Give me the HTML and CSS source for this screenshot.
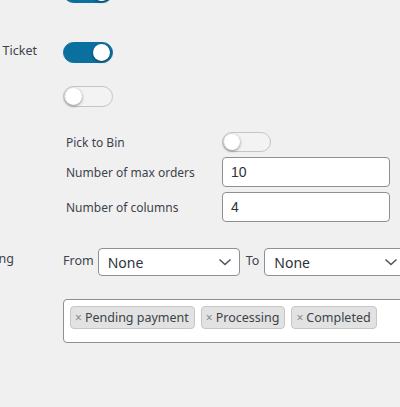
FILE: index.html
```html
<!DOCTYPE html>
<html>
<head>
<meta charset="utf-8">
<link rel="stylesheet" href="styles.css">
</head>
<body>
<div class="form">
  <div class="row row-first">
    <div class="th"></div>
    <div class="td"><span class="toggle on"><span class="knob"></span></span></div>
  </div>
  <div class="row row-ticket">
    <div class="th th-ticket"><span class="th-text">Print Ticket</span></div>
    <div class="td"><span class="toggle on"><span class="knob"></span></span></div>
  </div>
  <div class="row row-third">
    <div class="th"></div>
    <div class="td">
      <span class="toggle"><span class="knob"></span></span>
      <div class="sub">
        <div class="sub-label">Pick to Bin</div>
        <div class="sub-field"><span class="toggle small"><span class="knob"></span></span></div>
        <div class="sub-label">Number of max orders</div>
        <div class="sub-field"><input class="text" type="text" value="10"></div>
        <div class="sub-label">Number of columns</div>
        <div class="sub-field"><input class="text" type="text" value="4"></div>
      </div>
    </div>
  </div>
  <div class="row row-status">
    <div class="th th-status"><span class="th-text">Order Status Filtering</span></div>
    <div class="td">
      <div class="range">
        <span class="range-label">From</span>
        <div class="select"><span>None</span><svg class="chev" width="14" height="8" viewBox="0 0 14 8"><path d="M1.5 1.5 L7 6.5 L12.5 1.5" fill="none" stroke="#50575e" stroke-width="1.6"/></svg></div>
        <span class="range-label to">To</span>
        <div class="select"><span>None</span><svg class="chev" width="14" height="8" viewBox="0 0 14 8"><path d="M1.5 1.5 L7 6.5 L12.5 1.5" fill="none" stroke="#50575e" stroke-width="1.6"/></svg></div>
      </div>
      <div class="tags">
        <span class="tag"><span class="x">×</span>Pending payment</span>
        <span class="tag"><span class="x">×</span>Processing</span>
        <span class="tag"><span class="x">×</span>Completed</span>
      </div>
    </div>
  </div>
</div>
</body>
</html>
```

FILE: styles.css
```css
html, body {
  margin: 0;
  padding: 0;
  background: #f0f0f1;
  overflow: hidden;
}
body {
  width: 400px;
  height: 407px;
  font-family: "Noto Sans", "Open Sans", sans-serif;
  color: #3c434a;
  font-size: 12px;
}
.form {
  display: flex;
  flex-direction: column;
}
.row {
  display: grid;
  grid-template-columns: 63px 500px;
}
.th {
  overflow: hidden;
  white-space: nowrap;
  display: flex;
  justify-content: flex-end;
}
.th-text {
  flex: none;
  white-space: nowrap;
}
.th-ticket {
  padding-right: 26px;
  line-height: 18px;
  font-size: 12.5px;
}
.th-status {
  padding-right: 49px;
  line-height: 20px;
  font-size: 12.5px;
}
.row-first {
  margin-top: -18px;
}
.row-ticket {
  margin-top: 39px;
}
.row-third {
  margin-top: 23px;
}
.row-status {
  margin-top: 26px;
}
.row-status .th {
  align-items: flex-start;
  padding-top: 1px;
}
.toggle {
  display: block;
  position: relative;
  width: 48px;
  height: 19px;
  border-radius: 12px;
  border: 1px solid #c3c4c7;
  background: #f3f3f4;
  box-sizing: content-box;
}
.toggle.on {
  background: #0b6fa0;
  border-color: #0b6fa0;
}
.toggle.small {
  width: 47px;
  height: 18px;
}
.knob {
  position: absolute;
  top: 1px;
  left: 1px;
  width: 17px;
  height: 17px;
  border-radius: 50%;
  background: #fff;
  box-shadow: 0 1px 3px rgba(0,0,0,0.45);
}
.toggle.small .knob {
  width: 16px;
  height: 16px;
}
.toggle.on .knob {
  left: auto;
  right: 2px;
}
.sub {
  display: grid;
  grid-template-columns: 159px 168px;
  row-gap: 5px;
  margin-top: 25px;
}
.sub-label {
  padding-left: 3px;
  display: flex;
  align-items: center;
  white-space: nowrap;
}
.sub-field {
  display: flex;
  align-items: center;
}
.text {
  width: 168px;
  height: 30px;
  box-sizing: border-box;
  border: 1px solid #8c8f94;
  border-radius: 4px;
  background: #fff;
  padding: 0 8px;
  font-family: "Liberation Sans", Arial, sans-serif;
  font-size: 14px;
  color: #2c3338;
  margin: 0;
}
.range {
  display: flex;
  align-items: center;
  height: 28px;
}
.range-label {
  font-size: 12.5px;
  margin-right: 4px;
  position: relative;
  top: -2px;
}
.range-label.to {
  margin-left: 6px;
  margin-right: 5px;
}
.select {
  width: 142px;
  height: 28px;
  box-sizing: border-box;
  border: 1px solid #8c8f94;
  border-radius: 4px;
  background: #fff;
  display: flex;
  align-items: center;
  justify-content: space-between;
  padding: 0 7px 0 9px;
  font-size: 14px;
  color: #2c3338;
  flex: none;
}
.chev {
  display: block;
}
.tags {
  margin-top: 23px;
  width: 400px;
  height: 44px;
  box-sizing: border-box;
  border: 1px solid #8c8f94;
  border-radius: 4px;
  background: #fff;
  padding: 6px 6px;
  display: flex;
  gap: 6px;
  align-items: flex-start;
}
.tag {
  display: flex;
  align-items: center;
  height: 23px;
  box-sizing: border-box;
  padding: 0 5px 0 4px;
  background: #e2e2e2;
  border: 1px solid #c6c6c6;
  border-radius: 4px;
  font-size: 12.5px;
  color: #3c434a;
  white-space: nowrap;
}
.x {
  color: #8a8a8a;
  margin-right: 3px;
  font-size: 12px;
}
```
